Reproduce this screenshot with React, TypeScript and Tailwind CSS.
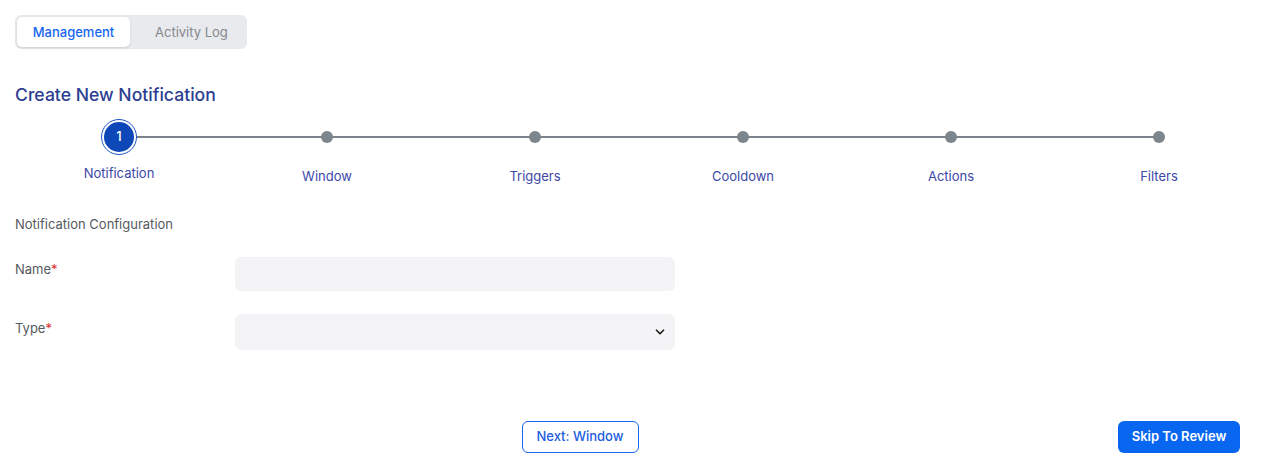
import { ChevronDown } from "lucide-react";

const steps = ["Notification", "Window", "Triggers", "Cooldown", "Actions", "Filters"];

export default function App() {
  return (
    <div className="min-h-screen bg-white font-['Inter',sans-serif] px-[15px] pt-[15px] pr-[16px]">
      {/* Tabs */}
      <div className="inline-flex bg-[#e9eaee] rounded-md p-[2px] h-[34px]">
        <button className="w-[113px] pt-[2px] rounded-[5px] bg-white text-[13px] font-medium text-[#1766f0] shadow-sm">
          Management
        </button>
        <button className="w-[115px] pt-[2px] rounded-[5px] pl-[25px] text-left text-[13px] text-[#85878c]">Activity Log</button>
      </div>

      <h1 className="mt-[35px] text-[17.6px] font-medium text-[#2c3e91] leading-[22px]">Create New Notification</h1>

      {/* Stepper */}
      <div className="relative mt-[9px] grid grid-cols-6">
        <div className="absolute left-[104px] right-[104px] top-[21px] h-[2px] bg-[#7b8289]" />
        {steps.map((s, i) => (
          <div key={s} className="relative flex flex-col items-center">
            <div className="h-[44px] flex items-center justify-center">
              {i === 0 ? (
                <div className="w-[36px] h-[36px] rounded-full border-[1.5px] border-[#1f55c0] bg-white p-[2px]">
                  <div className="w-full h-full rounded-full bg-[#0d47b8] flex items-center justify-center text-white text-[13px] font-medium">
                    1
                  </div>
                </div>
              ) : (
                <div className="w-[12px] h-[12px] rounded-full bg-[#7d858d]" />
              )}
            </div>
            <div className={`text-[13px] text-[#3b48a8] ${i === 0 ? "mt-[5px]" : "mt-[8px]"}`}>{s}</div>
          </div>
        ))}
      </div>

      {/* Form */}
      <div className="mt-[28px] text-[13px] text-[#555a60]">Notification Configuration</div>

      <div className="mt-[23px] flex items-start">
        <label className="w-[220px] pt-[3px] text-[13px] text-[#555a60]">
          Name<span className="text-[#d9302c]">*</span>
        </label>
        <input className="w-[440px] h-[34px] rounded-md bg-[#f4f4f6] outline-none px-3 text-sm" />
      </div>

      <div className="mt-[23px] flex items-start">
        <label className="w-[220px] pt-[5px] text-[13px] text-[#555a60]">
          Type<span className="text-[#d9302c]">*</span>
        </label>
        <div className="relative w-[440px] h-[36px] rounded-md bg-[#f4f4f6]">
          <ChevronDown className="absolute right-[8px] top-[11px] w-[14px] h-[14px] text-[#222]" strokeWidth={3} />
        </div>
      </div>

      {/* Buttons */}
      <div className="mt-[71px] relative h-[32px]">
        <div className="flex justify-center">
          <button className="ml-[-118px] w-[117px] h-[32px] rounded-md border border-[#1766f0] text-[13px] font-medium text-[#1c5ee0]">
            Next: Window
          </button>
        </div>
        <button className="absolute right-[23px] top-0 w-[122px] h-[32px] rounded-md bg-[#0866f0] text-[13px] font-semibold text-white">
          Skip To Review
        </button>
      </div>
    </div>
  );
}
